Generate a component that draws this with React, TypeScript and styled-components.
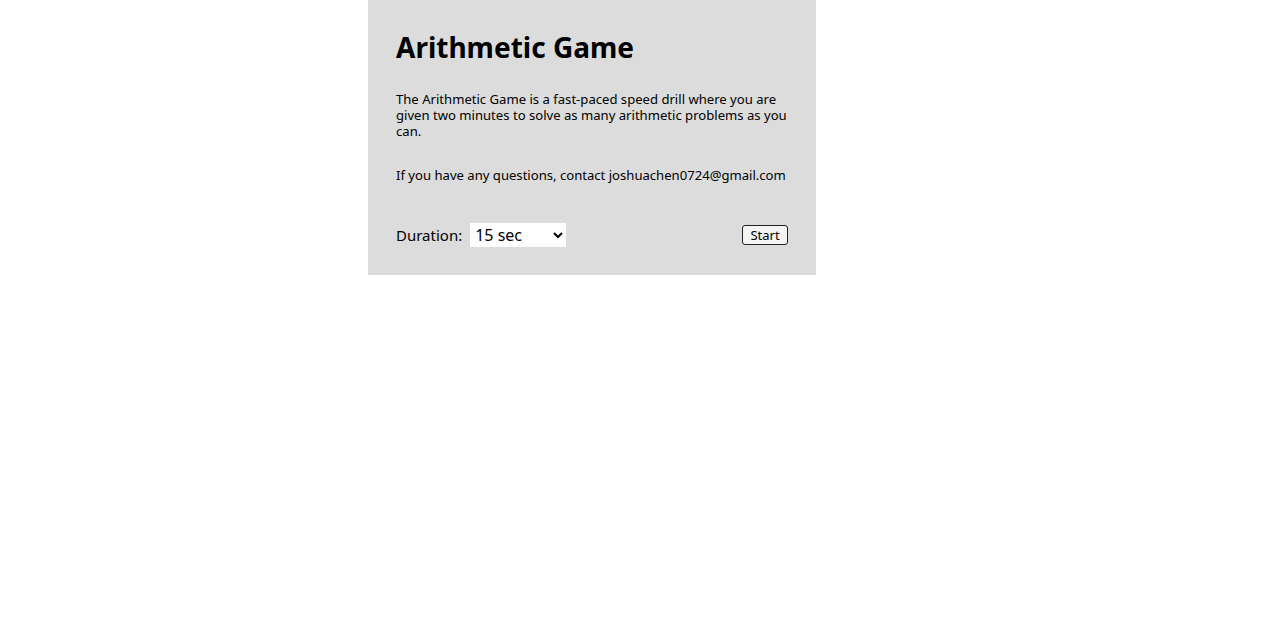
import React from "react";
import styled, { createGlobalStyle } from "styled-components";

const Global = createGlobalStyle`
  html, body { margin: 0; padding: 0; background: #ffffff; }
  body { font-family: "Noto Sans", "DejaVu Sans", sans-serif; color: #000; }
`;

const Page = styled.div`
  display: flex;
  padding-left: 368px;
`;

const Panel = styled.section`
  width: 448px;
  box-sizing: border-box;
  background: #dcdcdc;
  padding: 28px 28px 28px 28px;
  display: flex;
  flex-direction: column;
`;

const Title = styled.h1`
  margin: 0;
  font-size: 28px;
  line-height: 38px;
  font-weight: 700;
`;

const Para = styled.p<{ $top: number }>`
  margin: ${(p) => p.$top}px -4px 0 0;
  font-size: 13.1px;
  line-height: 16px;
`;

const Row = styled.div`
  display: flex;
  align-items: center;
  justify-content: space-between;
  margin-top: 40px;
`;

const Left = styled.label`
  display: flex;
  align-items: center;
  gap: 8px;
  font-size: 15px;
`;

const Select = styled.select`
  width: 96px;
  height: 24px;
  border: none;
  background: #fff;
  font-family: inherit;
  font-size: 16px;
  padding: 0 1px;
  color: #000;
`;

const Button = styled.button`
  height: 20px;
  width: 46px;
  border: 1px solid #222;
  border-radius: 3px;
  background: #f4f4f4;
  font-family: inherit;
  font-size: 13px;
  padding: 0;
  color: #000;
`;

export default function App() {
  return (
    <>
      <Global />
      <Page>
        <Panel>
          <Title>Arithmetic Game</Title>
          <Para $top={25}>
            The Arithmetic Game is a fast-paced speed drill where you are given two minutes to solve as many arithmetic problems as you can.
          </Para>
          <Para $top={28}>If you have any questions, contact joshuachen0724@gmail.com</Para>
          <Row>
            <Left>
              Duration:
              <Select defaultValue="15">
                <option value="15">15 sec</option>
                <option value="30">30 sec</option>
                <option value="60">60 sec</option>
                <option value="120">120 sec</option>
              </Select>
            </Left>
            <Button>Start</Button>
          </Row>
        </Panel>
      </Page>
    </>
  );
}
